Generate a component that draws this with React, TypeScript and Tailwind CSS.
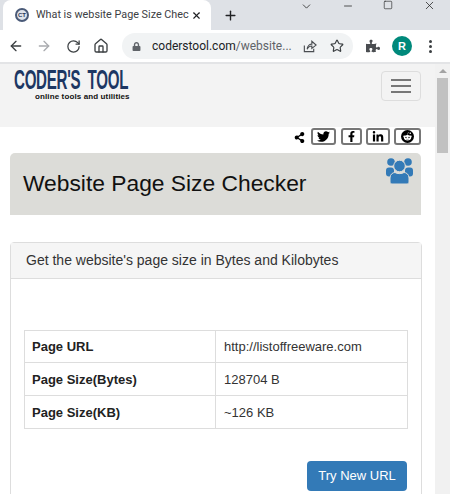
import React from 'react';
import { FaTwitter, FaFacebookF, FaLinkedinIn, FaRedditAlien, FaShareAlt, FaLock, FaPuzzlePiece } from 'react-icons/fa';
import { ArrowLeft, ArrowRight, RotateCw, Home, X, Plus, Minus, Square, ChevronDown, Star } from 'lucide-react';

const rows = [
  { label: 'Page URL', value: 'http://listoffreeware.com', height: 'h-[32px]' },
  { label: 'Page Size(Bytes)', value: '128704 B', height: 'h-[33px]' },
  { label: 'Page Size(KB)', value: '~126 KB', height: 'h-[33px]' },
];

const App: React.FC = () => {
  return (
    <div className="w-[450px] h-[494px] overflow-hidden bg-white font-['Liberation_Sans',sans-serif] flex flex-col">
      {/* Tab strip */}
      <div className="h-[30px] shrink-0 bg-[#dee1e6] flex items-end relative">
        <div className="ml-[3px] w-[208px] h-[30px] bg-white rounded-t-lg flex items-center pl-[12px]">
          <div className="w-[14px] h-[14px] rounded-full border-2 border-[#4a5a78] bg-[#dfe3ea] flex items-center justify-center text-[6px] font-bold text-[#2c3a58]">CT</div>
          <span className="ml-[7px] w-[153px] whitespace-nowrap text-[10.8px] text-[#3c4043] font-['Roboto',sans-serif]">What is website Page Size Chec</span>
          <X size={11} strokeWidth={2.5} className="ml-[2px] text-[#202124]" />
        </div>
        <Plus size={15} strokeWidth={2.2} className="ml-[12px] mb-[7px] text-[#202124]" />
        <ChevronDown size={13} strokeWidth={1.6} className="absolute left-[300px] top-0 text-[#333]" />
        <Minus size={12} strokeWidth={1.5} className="absolute left-[342px] top-0 text-[#222]" />
        <Square size={10} strokeWidth={1.5} className="absolute left-[383px] top-[0px] text-[#222]" />
        <X size={13} strokeWidth={1.4} className="absolute left-[423px] top-[-1px] text-[#222]" />
      </div>

      {/* Toolbar */}
      <div className="h-[32px] shrink-0 bg-white flex items-center border-b-2 border-[#e3e4e6] box-content">
        <ArrowLeft size={16} strokeWidth={2} className="ml-[8px] text-[#3c4043]" />
        <ArrowRight size={16} strokeWidth={2} className="ml-[12px] text-[#a9abaf]" />
        <RotateCw size={15} strokeWidth={2} className="ml-[14px] text-[#3c4043]" />
        <Home size={16} strokeWidth={2} className="ml-[12px] text-[#3c4043]" />
        <div className="ml-[13px] w-[231px] h-[26px] shrink-0 rounded-full bg-[#f1f3f4] flex items-center pl-[10px]">
          <FaLock size={9} className="text-[#5f6368]" />
          <span className="ml-[11px] w-[140px] shrink-0 text-[12px] text-[#202124] whitespace-nowrap font-['Roboto',sans-serif]">coderstool.com<span className="text-[#5f6368]">/website...</span></span>
          <svg width="15" height="15" viewBox="0 0 16 16" fill="none" stroke="#4a4d51" strokeWidth="1.2" className="ml-[10px]">
            <path d="M2.5 7 V13.5 H12.5 V10.5" />
            <path d="M5.5 11 C5.5 7 8.5 5.5 10.5 5.5 V2.5 L15 6.5 L10.5 10 V7.5 C8.5 7.5 6.5 8.5 5.5 11 Z" />
          </svg>
          <Star size={14} strokeWidth={2} className="ml-[13px] text-[#3c4043]" />
        </div>
        <FaPuzzlePiece size={14} className="ml-[13px] text-[#4a4d51]" />
        <div className="ml-[12px] w-[20px] h-[20px] rounded-full bg-[#00897b] text-white text-[11px] font-bold flex items-center justify-center">R</div>
        <div className="ml-[17px] flex flex-col gap-[2px]">
          <span className="w-[3px] h-[3px] rounded-full bg-[#3c4043]"></span>
          <span className="w-[3px] h-[3px] rounded-full bg-[#3c4043]"></span>
          <span className="w-[3px] h-[3px] rounded-full bg-[#3c4043]"></span>
        </div>
      </div>

      <div className="flex flex-1 min-h-0">
        {/* Page */}
        <div className="w-[435px] shrink-0 overflow-hidden">
          <div className="h-[63px] bg-[#f3f3f3] flex justify-between pl-[14px] pr-[14px]">
            <div className="pt-[4px]">
              <div className="text-[#1d3763] text-[27px] leading-[24px] font-bold tracking-[-0.5px] [word-spacing:6px] whitespace-nowrap origin-left scale-x-[0.56] w-[115px]">CODER'S TOOL</div>
              <div className="ml-[21px] text-[8px] leading-[9px] tracking-[0.12px] font-bold text-[#111] whitespace-nowrap">online tools and utilities</div>
            </div>
            <div className="mt-[7px] w-[40px] h-[30px] rounded border border-[#dddddd] flex flex-col items-center justify-center gap-[4px]">
              <span className="w-[20px] h-[2px] bg-[#777]"></span>
              <span className="w-[20px] h-[2px] bg-[#777]"></span>
              <span className="w-[20px] h-[2px] bg-[#777]"></span>
            </div>
          </div>

          {/* Share row */}
          <div className="h-[26px] flex items-start justify-end pr-[14px] pt-[1px]">
            <FaShareAlt size={11} className="text-black mt-[4px] mr-[6px]" />
            <div className="w-[25px] h-[17px] border-2 border-[#777] rounded-[3px] flex items-center justify-center"><FaTwitter size={13} className="text-black" /></div>
            <div className="ml-[5px] w-[21px] h-[17px] border-2 border-[#777] rounded-[3px] flex items-center justify-center"><FaFacebookF size={11} className="text-black" /></div>
            <div className="ml-[4px] w-[24px] h-[17px] border-2 border-[#777] rounded-[3px] flex items-center justify-center"><FaLinkedinIn size={12} className="text-black" /></div>
            <div className="ml-[4px] w-[27px] h-[17px] border-2 border-[#777] rounded-[3px] flex items-center justify-center">
              <div className="w-[13px] h-[13px] rounded-full bg-black flex items-center justify-center"><FaRedditAlien size={9} className="text-white" /></div>
            </div>
          </div>

          {/* Jumbotron */}
          <div className="relative mx-[10px] w-[411px] h-[62px] bg-[#dcdcd8] rounded-t-[5px] pl-[13px] pt-[16px]">
            <h1 className="text-[22.8px] leading-[28px] text-[#111]">Website Page Size Checker</h1>
            <svg width="27" height="26" viewBox="0 0 27 26" className="absolute right-[8px] top-[5px]" fill="#337ab7">
              <circle cx="5" cy="4" r="3.8" />
              <circle cx="22" cy="4" r="3.8" />
              <rect x="0" y="9.5" width="8" height="9" rx="3" />
              <rect x="19" y="9.5" width="8" height="9" rx="3" />
              <circle cx="13.5" cy="8" r="5.8" stroke="#dcdcd8" strokeWidth="1" />
              <path d="M4 24 V20 C4 16.5 6.5 14.5 9 14.5 C11 16 16 16 18 14.5 C20.5 14.5 23 16.5 23 20 V24 C23 25 22 26 21 26 H6 C5 26 4 25 4 24 Z" stroke="#dcdcd8" strokeWidth="1" />
            </svg>
          </div>

          {/* Panel */}
          <div className="mx-[10px] mt-[27px] w-[412px] h-[300px] border border-[#dddddd] rounded-t-[4px]">
            <div className="h-[36px] bg-[#f5f5f5] border-b border-[#dddddd] pl-[15px] flex items-center text-[14px] text-[#333]">Get the website's page size in Bytes and Kilobytes</div>
            <div className="px-[13px] pt-[51px]">
              <table className="w-[384px] border-collapse text-[13px] text-[#333]">
                <tbody>
                  {rows.map((row) => (
                    <tr key={row.label} className={row.height}>
                      <td className="w-[191px] border border-[#dddddd] pl-[7px] pt-[1px] font-bold text-[#222]">{row.label}</td>
                      <td className="border border-[#dddddd] pl-[8px] pt-[1px]">{row.value}</td>
                    </tr>
                  ))}
                </tbody>
              </table>
              <div className="flex justify-end mt-[32px] mr-[1px]">
                <button className="w-[100px] h-[30px] bg-[#337ab7] rounded text-white text-[13px]">Try New URL</button>
              </div>
            </div>
          </div>
        </div>

        {/* Scrollbar */}
        <div className="w-[15px] shrink-0 bg-[#f1f1f1] flex flex-col items-center pt-[5px]">
          <div className="w-0 h-0 border-l-[4px] border-r-[4px] border-b-[4px] border-l-transparent border-r-transparent border-b-[#a3a3a3]"></div>
          <div className="mt-[5px] w-[11px] h-[75px] bg-[#c1c1c1]"></div>
        </div>
      </div>
    </div>
  );
};

export default App;
